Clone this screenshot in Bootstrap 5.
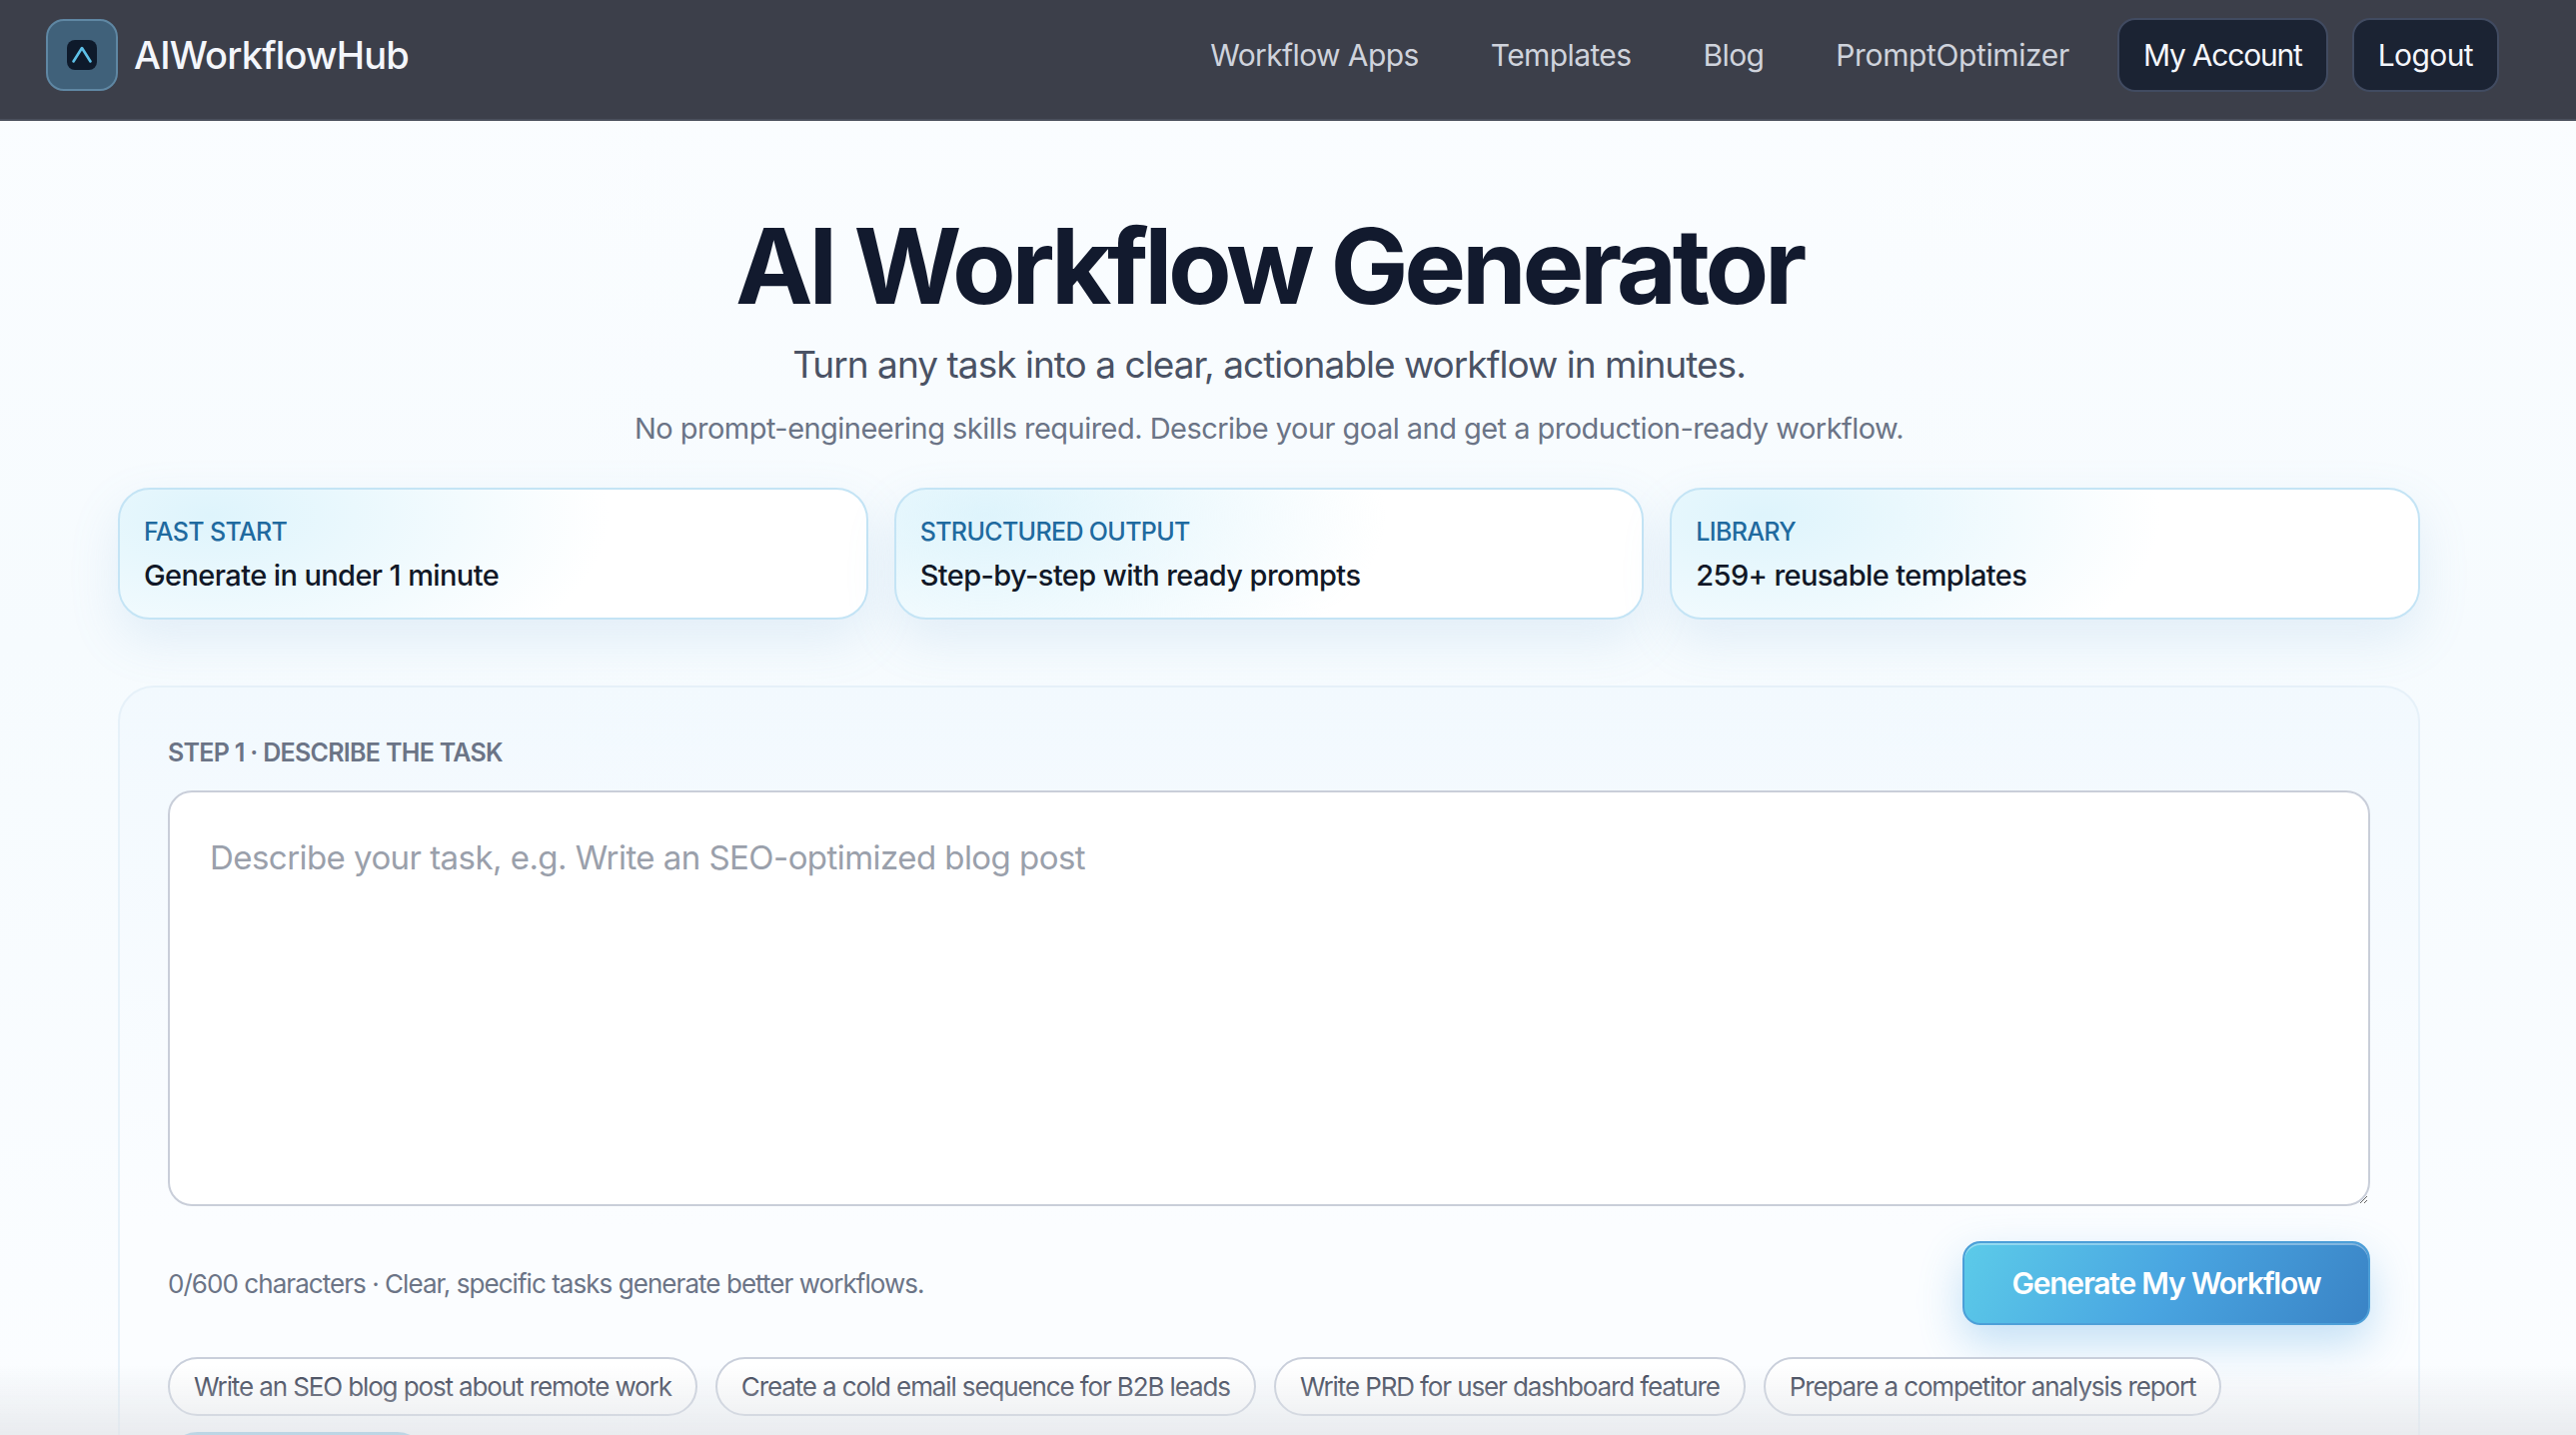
<!DOCTYPE html>
<html lang="en">
<head>
    <meta charset="UTF-8">
    <meta name="viewport" content="width=device-width, initial-scale=1.0">
    <title>AI Workflow Generator</title>
    <link href="https://cdn.jsdelivr.net/npm/bootstrap@5.3.3/dist/css/bootstrap.min.css" rel="stylesheet">
    <style>
        html, body { height: 100%; overflow: hidden; }
        body {
            font-family: "Inter", "Noto Sans", sans-serif;
            background: linear-gradient(180deg, #fbfdff 0%, #f6fbfe 45%, #fbfdff 100%);
            color: #111827;
        }
        .top-nav {
            height: 121px;
            background: #3c3f4a;
            border-bottom: 2px solid #4a4f5c;
            padding: 0 77px 9px 46px;
        }
        .logo-box {
            width: 72px; height: 72px;
            background: #40617a;
            border: 2px solid #5f87a3;
            border-radius: 18px;
        }
        .logo-inner { width: 30px; height: 30px; background: #0e1a2b; border-radius: 8px; }
        .brand-name { font-size: 38px; font-weight: 500; color: #f4f6fb; letter-spacing: -.8px; margin-left: 16px; }
        .top-nav .nav-link { font-size: 30px; color: #cfd3dc; padding: 0; letter-spacing: -.6px; margin-right: 72px; }
        .top-nav .nav-link.last { margin-right: 48px; letter-spacing: -.38px; }
        .btn-dark-nav {
            background: #1b2333; border: 2px solid #414b61; color: #f4f6fb;
            font-size: 30px; letter-spacing: -.6px; border-radius: 18px; height: 74px; padding: 0 24px;
            display: flex; align-items: center;
        }
        .btn-account { letter-spacing: -1.2px; }
        .page { width: 2304px; margin-left: 118px; padding-top: 80px; }
        .hero-title { font-size: 104px; font-weight: 700; line-height: 130px; color: #121a2e; letter-spacing: -4.3px; margin-bottom: 11px; }
        .hero-sub { font-size: 37px; line-height: 46px; color: #4a5264; letter-spacing: -.97px; margin-bottom: 21px; }
        .hero-note { font-size: 29px; line-height: 40px; color: #6b7486; letter-spacing: -.53px; margin-bottom: 39px; }
        .stat-row { --bs-gutter-x: 26px; --bs-gutter-y: 0; margin-bottom: 66px; }
        .stat-card {
            height: 132px;
            border: 2px solid #c4e4f5;
            border-radius: 32px;
            padding: 24px 24px;
            background: radial-gradient(ellipse 400px 190px at 12% 20%, #def4fc 0%, rgba(224,245,252,0) 100%), #fff;
            box-shadow: 0 20px 50px rgba(120,170,210,.16);
        }
        .stat-label { font-size: 25px; font-weight: 500; line-height: 36px; color: #1f6a9f; letter-spacing: -.65px; }
        .stat-value { font-size: 29px; font-weight: 500; line-height: 44px; color: #111827; letter-spacing: -.6px; margin-top: 4px; }
        .panel {
            border: 2px solid #e6f1f9;
            border-radius: 36px;
            padding: 49px 48px 0;
            background: linear-gradient(180deg, #f2f9fe 0%, #fbfdff 60%);
            height: 900px;
        }
        .step-label { font-size: 25px; font-weight: 600; line-height: 32px; color: #6b7486; letter-spacing: -.7px; margin-bottom: 22px; }
        .task-input.form-control {
            height: 416px;
            border: 2px solid #c9ced9;
            border-radius: 24px;
            padding: 46px 40px;
            font-size: 33px;
            letter-spacing: -.55px;
            line-height: 1.2;
        }
        .task-input::placeholder { color: #9aa0ab; }
        .form-foot { margin-top: 35px; }
        .char-hint { font-size: 26px; color: #6b7486; letter-spacing: -.95px; }
        .btn-generate {
            width: 408px; height: 84px;
            font-size: 30px; font-weight: 600; color: #fff; letter-spacing: -1.2px;
            border: 2px solid #4d9fd8;
            border-radius: 18px;
            background: linear-gradient(120deg, #5ccbe9 0%, #49a5e1 50%, #3a83c5 100%);
            box-shadow: inset 0 2px 0 rgba(255,255,255,.35), 0 18px 44px rgba(74,163,224,.32);
        }
        .chips { margin-top: 32px; gap: 16px 18px; }
        .chip {
            height: 59px;
            display: flex; align-items: center;
            padding: 0 24px;
            font-size: 26px; color: #3a4154; letter-spacing: -1.12px;
            background: #fff;
            border: 2px solid #c9cfdb;
        }
        .chip-more { width: 259px; background: #6cb6dc; border-color: #6cb6dc; padding: 0; }
        .screen-fade {
            position: fixed; left: 0; right: 0; bottom: 0; height: 70px;
            background: linear-gradient(180deg, rgba(225,228,232,0) 0%, rgba(225,228,232,.7) 100%);
            pointer-events: none;
        }
    </style>
</head>
<body>
    <nav class="navbar navbar-expand top-nav">
        <a class="d-flex align-items-center text-decoration-none" href="#">
            <span class="logo-box d-flex align-items-center justify-content-center">
                <span class="logo-inner d-block">
                    <svg width="30" height="30" viewBox="0 0 30 30" fill="none" stroke="#5ec1e8" stroke-width="2.6" stroke-linecap="round" stroke-linejoin="round"><path d="M6.5 21.5 15 8l8.5 13.5"/></svg>
                </span>
            </span>
            <span class="brand-name">AIWorkflowHub</span>
        </a>
        <div class="ms-auto d-flex align-items-center">
            <a class="nav-link" href="#">Workflow Apps</a>
            <a class="nav-link" href="#">Templates</a>
            <a class="nav-link" href="#">Blog</a>
            <a class="nav-link last" href="#">PromptOptimizer</a>
            <a class="btn btn-dark-nav btn-account me-4" href="#">My Account</a>
            <a class="btn btn-dark-nav" href="#">Logout</a>
        </div>
    </nav>

    <main class="page">
        <div class="text-center">
            <h1 class="hero-title">AI Workflow Generator</h1>
            <p class="hero-sub">Turn any task into a clear, actionable workflow in minutes.</p>
            <p class="hero-note">No prompt-engineering skills required. Describe your goal and get a production-ready workflow.</p>
        </div>

        <div class="row stat-row">
            <div class="col-4">
                <div class="stat-card">
                    <div class="stat-label">FAST START</div>
                    <div class="stat-value">Generate in under 1 minute</div>
                </div>
            </div>
            <div class="col-4">
                <div class="stat-card">
                    <div class="stat-label">STRUCTURED OUTPUT</div>
                    <div class="stat-value">Step-by-step with ready prompts</div>
                </div>
            </div>
            <div class="col-4">
                <div class="stat-card">
                    <div class="stat-label">LIBRARY</div>
                    <div class="stat-value">259+ reusable templates</div>
                </div>
            </div>
        </div>

        <section class="panel">
            <div class="step-label">STEP 1 · DESCRIBE THE TASK</div>
            <textarea class="form-control task-input" placeholder="Describe your task, e.g. Write an SEO-optimized blog post"></textarea>
            <div class="d-flex justify-content-between align-items-center form-foot">
                <span class="char-hint">0/600 characters · Clear, specific tasks generate better workflows.</span>
                <button type="button" class="btn btn-generate">Generate My Workflow</button>
            </div>
            <div class="d-flex flex-wrap chips">
                <span class="chip rounded-pill">Write an SEO blog post about remote work</span>
                <span class="chip rounded-pill">Create a cold email sequence for B2B leads</span>
                <span class="chip rounded-pill">Write PRD for user dashboard feature</span>
                <span class="chip rounded-pill">Prepare a competitor analysis report</span>
                <span class="chip chip-more rounded-pill"></span>
            </div>
        </section>
    </main>
    <div class="screen-fade"></div>
    <script src="https://cdn.jsdelivr.net/npm/bootstrap@5.3.3/dist/js/bootstrap.bundle.min.js"></script>
</body>
</html>
